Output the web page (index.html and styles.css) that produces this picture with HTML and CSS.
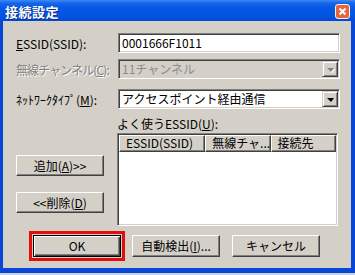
FILE: index.html
```html
<!DOCTYPE html>
<html lang="ja">

<head>
    <meta charset="UTF-8">
    <title>接続設定</title>
    <link rel="stylesheet" href="styles.css">
</head>

<body>

    <div class="window">
        <div class="titlebar">
            <span class="title">接続設定</span>
            <div class="close">
                <svg width="9" height="9" viewBox="0 0 9 9">
                    <path d="M1.5 1.5 L7.5 7.5 M7.5 1.5 L1.5 7.5" stroke="#fff" stroke-width="2" />
                </svg>
            </div>
        </div>

        <div class="client">
            <div class="row">
                <label class="label"><u>E</u>SSID(SSID):</label>
                <div class="field edit">0001666F1011</div>
            </div>

            <div class="row row-channel">
                <label class="label disabled">無線チャンネル(<u>C</u>):</label>
                <div class="field combo is-disabled">
                    <span class="combo-text">11チャンネル</span>
                    <span class="drop"><i class="arrow"></i></span>
                </div>
            </div>

            <div class="row row-type">
                <label class="label">ﾈｯﾄﾜｰｸﾀｲﾌﾟ(<u>M</u>):</label>
                <div class="field combo">
                    <span class="combo-text">アクセスポイント経由通信</span>
                    <span class="drop"><i class="arrow"></i></span>
                </div>
            </div>

            <div class="favorites">
                <div class="side-buttons">
                    <button class="btn btn-add">追加(<u>A</u>)&gt;&gt;</button>
                    <button class="btn btn-remove">&lt;&lt;削除(<u>D</u>)</button>
                </div>
                <div class="fav-list">
                    <div class="fav-label">よく使うESSID(<u>U</u>):</div>
                    <div class="listview">
                        <div class="list-header">
                            <span class="col col-essid">ESSID(SSID)</span>
                            <span class="col col-channel">無線チャ...</span>
                            <span class="col col-target">接続先</span>
                        </div>
                    </div>
                </div>
            </div>

            <div class="actions">
                <span class="highlight">
                    <button class="btn btn-default">OK</button>
                </span>
                <button class="btn btn-detect">自動検出(<u>I</u>)...</button>
                <button class="btn">キャンセル</button>
            </div>
        </div>
    </div>

</body>

</html>
```

FILE: styles.css
```css
body {
    margin: 0;
    background: #c9d2e8;
    font-family: "Noto Sans CJK JP", sans-serif;
    font-size: 12px;
    color: #000;
}

u {
    text-decoration: underline;
    text-underline-offset: 1px;
}

.window {
    width: 355px;
    height: 273px;
    display: flex;
    flex-direction: column;
}

/* XP style caption */
.titlebar {
    height: 21px;
    display: flex;
    align-items: center;
    justify-content: space-between;
    padding: 0 5px 0 5px;
    box-sizing: border-box;
    background: linear-gradient(#3d8cf5 0, #1865ea 3px, #0558e6 8px, #0454e2 16px, #0348d2 21px);
}

.title {
    color: #fff;
    font-weight: bold;
    font-size: 13px;
    letter-spacing: 0.5px;
    text-shadow: 1px 1px 0 #0a2d8c;
    padding-top: 1px;
}

.close {
    flex: none;
    width: 15px;
    height: 15px;
    box-sizing: border-box;
    border: 1px solid #f4f4f4;
    border-radius: 3px;
    background-color: #e8643a;
    display: flex;
    align-items: center;
    justify-content: center;
    margin-top: 1px;
}

.close svg {
    display: block;
}

.client {
    flex: 1;
    background: #d4d0c8;
    border-style: solid;
    border-color: #0846d8;
    border-width: 0 4px 5px 3px;
    padding: 12px 0 0 13px;
}

.row {
    display: flex;
    align-items: center;
    height: 20px;
}

.row-channel {
    margin-top: 6px;
}

.row-type {
    margin-top: 10px;
}

.label {
    width: 102px;
    flex: none;
    white-space: nowrap;
}

.label.disabled {
    color: #808080;
    text-shadow: 1px 1px 0 #fff;
    letter-spacing: -0.9px;
}

/* sunken classic field */
.field {
    width: 222px;
    height: 20px;
    box-sizing: border-box;
    border: 1px solid;
    border-color: #808080 #fff #fff #808080;
    box-shadow: inset 1px 1px 0 #404040, inset -1px -1px 0 #d4d0c8;
    background: #fff;
    display: flex;
    align-items: center;
    padding: 0 2px 0 3px;
    line-height: 16px;
    white-space: nowrap;
}

.combo {
    justify-content: space-between;
    padding-right: 1px;
}

.combo.is-disabled {
    background: #d4d0c8;
    color: #8c8c8c;
}

.drop {
    width: 16px;
    height: 16px;
    box-sizing: border-box;
    background: #d4d0c8;
    border: 1px solid;
    border-color: #d4d0c8 #404040 #404040 #d4d0c8;
    box-shadow: inset 1px 1px 0 #fff, inset -1px -1px 0 #808080;
    display: flex;
    align-items: center;
    justify-content: center;
}

.arrow {
    width: 0;
    height: 0;
    border-left: 4px solid transparent;
    border-right: 3px solid transparent;
    border-top: 4px solid #000;
    margin-top: 1px;
}

.is-disabled .arrow {
    border-top-color: #808080;
    filter: drop-shadow(1px 1px 0 #fff);
}

.favorites {
    display: flex;
    margin-top: 8px;
}

.side-buttons {
    width: 101px;
    display: flex;
    flex-direction: column;
    padding-top: 38px;
}

.btn-remove {
    margin-top: 16px;
}

.fav-label {
    height: 14px;
    line-height: 14px;
    margin-bottom: 2px;
    white-space: nowrap;
}

.listview {
    width: 221px;
    height: 93px;
    box-sizing: border-box;
    background: #fff;
    border: 1px solid;
    border-color: #808080 #fff #fff #808080;
    box-shadow: inset 1px 1px 0 #404040, inset -1px -1px 0 #d4d0c8;
    padding: 1px;
}

.list-header {
    display: flex;
    height: 17px;
}

.col {
    box-sizing: border-box;
    background: #d4d0c8;
    border: 1px solid;
    border-color: #fff #404040 #404040 #fff;
    box-shadow: inset -1px -1px 0 #808080;
    padding-left: 6px;
    line-height: 14px;
    white-space: nowrap;
    overflow: hidden;
}

.col-essid {
    width: 87px;
}

.col-channel {
    width: 66px;
}

.col-target {
    width: 66px;
}

/* raised classic button */
.btn {
    width: 88px;
    height: 21px;
    padding: 0;
    font-family: inherit;
    font-size: 12px;
    color: #000;
    background: #d4d0c8;
    border: 1px solid;
    border-color: #fff #404040 #404040 #fff;
    box-shadow: inset -1px -1px 0 #808080;
    line-height: 18px;
    white-space: nowrap;
}

.actions {
    display: flex;
    align-items: center;
    margin-top: 5px;
    padding-left: 13px;
}

.actions .btn {
    height: 22px;
}

.highlight {
    display: flex;
    border: 3px solid #e20d0d;
    padding: 1px;
    margin-right: 7px;
}

.btn-default {
    border: 1px solid #000;
    box-shadow: inset 1px 1px 0 #fff, inset -1px -1px 0 #404040, inset -2px -2px 0 #808080;
}

.btn-detect {
    margin-right: 12px;
}
```
